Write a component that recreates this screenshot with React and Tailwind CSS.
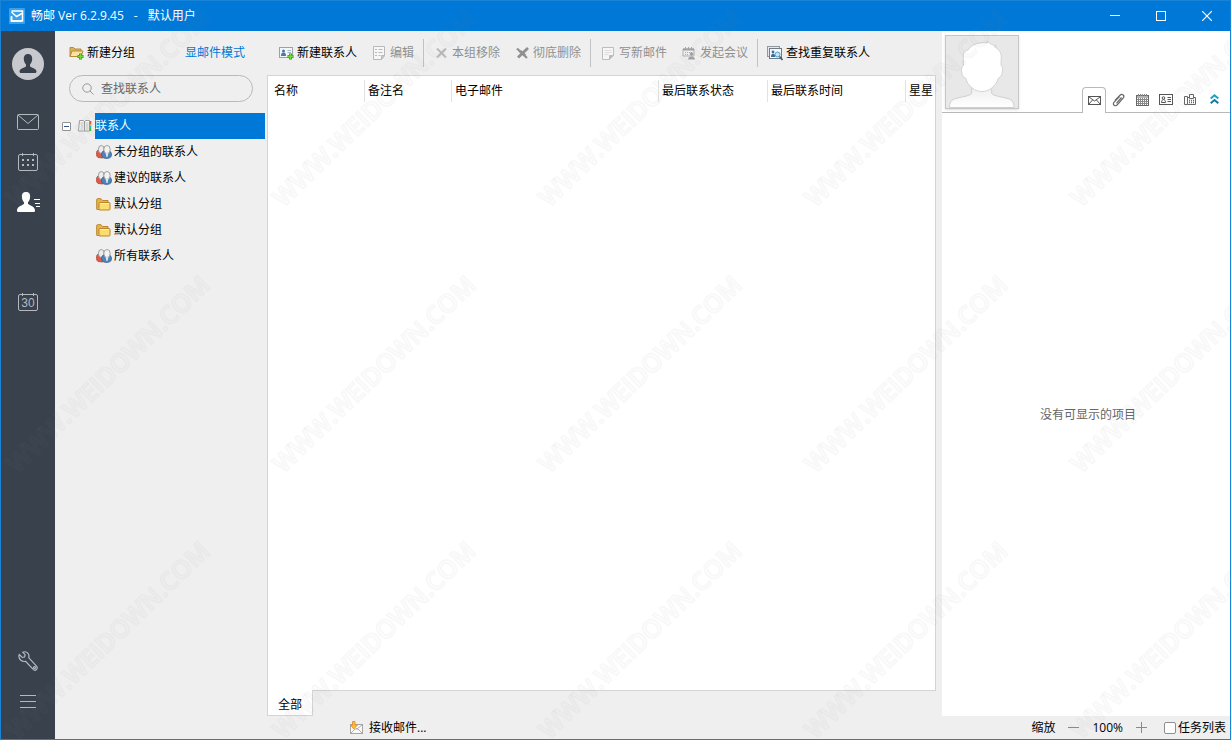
import { useState } from "react";

const FolderPlusIcon = () => (
  <svg width="15" height="14" viewBox="0 0 15 14" fill="none">
    <path d="M1 10.5V1.500h3.500l1.500 1.500H12v2" fill="#d9b25c" stroke="#b58a3a" />
    <path d="M1 10.500L3 5H14l-2 5.500z" fill="#fbe3a4" stroke="#b58a3a" />
    <path d="M8.500 10.500h6M11.500 7.500v6" stroke="#3a9a1c" strokeWidth="3" />
    <path d="M9 10.500h5M11.500 8v5" stroke="#6fdc3c" strokeWidth="1.400" />
  </svg>
);

const ContactPlusIcon = () => (
  <svg width="15" height="13" viewBox="0 0 15 13" fill="none">
    <rect x=".5" y=".5" width="13" height="10" fill="#f4f7fa" stroke="#96a2ac" />
    <circle cx="4.500" cy="4" r="1.500" fill="#4a78a6" />
    <path d="M2 9c0-2.600 1-3.400 2.500-3.400S7 6.400 7 9z" fill="#4a78a6" />
    <path d="M8.500 3.500h3.500M8.500 5.500h3.500" stroke="#a8b3bd" />
    <path d="M8.500 9.500h6M11.500 6.500v6" stroke="#3a9a1c" strokeWidth="3" />
    <path d="M9 9.500h5M11.500 7v5" stroke="#6fdc3c" strokeWidth="1.400" />
  </svg>
);

const EditIcon = () => (
  <svg width="12" height="14" viewBox="0 0 12 14" fill="none" stroke="#b9b9b9">
    <path d="M.5.500h11v9l-3 4h-8z" fill="#f7f7f7" />
    <path d="M8.500 13.500v-4h3z" fill="#ccc" />
    <path d="M2 3.500h2M5.500 3.500h4M2 6.500h2M5.500 6.500h4M2 9.500h2M5.500 9.500h2" />
  </svg>
);

const RemoveIcon = () => (
  <svg width="11" height="10" viewBox="0 0 11 10" fill="none" stroke="#b8b8b8" strokeWidth="2">
    <path d="M1 .5l9 9M10 .5l-9 9" />
  </svg>
);

const DeleteIcon = () => (
  <svg width="13" height="12" viewBox="0 0 13 12" fill="none" stroke="#909090">
    <path d="M1 1.500l10 9.500" strokeWidth="2.200" />
    <path d="M12 1L2 10.500" strokeWidth="2.800" />
    <path d="M4 4l5 4.500" strokeWidth="3" />
  </svg>
);

const NoteIcon = () => (
  <svg width="12" height="13" viewBox="0 0 12 13" fill="none" stroke="#bdbdbd">
    <path d="M.5.500h11v8l-4 4h-7z" fill="#f6f6f6" />
    <path d="M7.500 12.500v-4h4z" fill="#bbb" />
    <path d="M2.500 3.500h7M2.500 5.500h7M2.500 7.500h4" stroke="#dedede" />
  </svg>
);

const MeetingIcon = () => (
  <svg width="14" height="13" viewBox="0 0 14 13" fill="none">
    <path d="M1 2h11v7H1z" fill="#eee" stroke="#b0b0b0" />
    <path d="M1 2.500h11" stroke="#a0a0a0" strokeWidth="2" />
    <path d="M3.500 0v2M6.500 0v2M9.500 0v2" stroke="#a5a5a5" />
    <path d="M3 5.500h7M3 7.500h4" stroke="#aaa" strokeDasharray="1 1" />
    <circle cx="9.500" cy="7" r="1.800" fill="#a0a0a0" />
    <path d="M6 12.500c0-4 7-4 7 0z" fill="#a0a0a0" />
  </svg>
);

const FindDuplicateIcon = () => (
  <svg width="16" height="15" viewBox="0 0 16 15" fill="none">
    <rect x=".5" y=".5" width="12" height="10" fill="#e6eaee" stroke="#8e99a2" />
    <rect x="2.500" y="2.500" width="12" height="10" fill="#f6f9fb" stroke="#6f7c87" />
    <circle cx="6" cy="6" r="1.400" fill="#3d6c9c" />
    <path d="M4 11c0-2.600.8-3.300 2-3.300s2.200.7 2.200 3.300z" fill="#3d6c9c" />
    <circle cx="10.500" cy="8.500" r="2.500" fill="#bfe6f5" stroke="#4f9cc0" />
    <path d="M12.500 10.500l3 3.500" stroke="#4a5661" strokeWidth="1.600" />
  </svg>
);

const PeopleIcon = () => (
  <svg width="16" height="14" viewBox="0 0 16 14" fill="none">
    <path d="M2 12.500C-.5 10.500 0 6.500 2 5l5 1v7z" fill="#dd5a48" stroke="#b04438" strokeWidth=".8" />
    <ellipse cx="5.300" cy="4.500" rx="2.900" ry="4" fill="#ececec" stroke="#8a8a8a" strokeWidth=".8" />
    <path d="M6 11.500C4.800 8.500 6 6.500 7.500 6h6c2 1 2.700 4 1.300 6-2 2-7 2-8.800-.5z" fill="#4d84bb" stroke="#35618f" strokeWidth=".8" />
    <ellipse cx="11" cy="4.500" rx="3.200" ry="4" fill="#f3f3f3" stroke="#8a8a8a" strokeWidth=".8" />
    <path d="M9.500 7.500h3L11.500 12h-1z" fill="#dce8f3" />
  </svg>
);

const FolderIcon = () => (
  <svg width="15" height="13" viewBox="0 0 15 13" fill="none">
    <path d="M.7 11.500V1.500Q.7.700 1.500.700h3.500L6.500 2.500h5.500v2" fill="#e8b44c" stroke="#bb852a" />
    <rect x="3" y="4.500" width="11" height="7.500" rx="1" fill="#fbdc6e" stroke="#bb852a" />
    <path d="M4 5.500h9" stroke="#fff1b5" />
    <path d="M1 11.500h2.500" stroke="#bb852a" />
  </svg>
);

const BookIcon = () => (
  <svg width="14" height="12" viewBox="0 0 14 12" fill="none">
    <path d="M1.500.500H5l1.500 1 1.500-1h3.500v10.500H.5z" fill="#fcfcfc" stroke="#9c9c9c" />
    <path d="M6.500 1v10" stroke="#9c9c9c" />
    <path d="M2.500 3h3M2.500 5h3M2.500 7h3M2.500 9h3M7.500 3h3M7.500 5h3M7.500 7h3M7.500 9h3" stroke="#b8b8b8" />
    <path d="M12.500 1v3" stroke="#e5503c" strokeWidth="1.500" />
    <path d="M12.500 4v2" stroke="#f0a53c" strokeWidth="1.500" />
    <path d="M12.500 6v2" stroke="#2bb6c8" strokeWidth="1.500" />
    <path d="M12.500 8v3" stroke="#38c437" strokeWidth="1.500" />
  </svg>
);

const UserIcon = () => (
  <svg width="32" height="32" viewBox="0 0 32 32">
    <circle cx="16" cy="16" r="16" fill="#c7c9ce" />
    <path d="M16 6c-3 0-4.300 2.200-4.200 5 .1 2.600 1.100 4.500 2.200 5.500v1.700c-.8 1.400-6.500 1.900-6.500 5.300 0 .900.600 1.500 1.500 1.500h14c.9 0 1.500-.6 1.500-1.500 0-3.400-5.700-3.900-6.500-5.300v-1.700c1.100-1 2.100-2.900 2.200-5.500.1-2.800-1.200-5-4.200-5z" fill="#38414c" />
  </svg>
);

const RailMailIcon = () => (
  <svg width="22" height="16" viewBox="0 0 22 16" fill="none" stroke="currentColor">
    <rect x=".5" y=".5" width="21" height="15" rx="1" />
    <path d="M1 1l10 8.500L21 1" />
  </svg>
);

const RailCalendarIcon = () => (
  <svg width="20" height="18" viewBox="0 0 20 18" fill="none" stroke="currentColor">
    <rect x=".5" y="1.500" width="19" height="16" rx="1.500" />
    <path d="M4.500 0v3M15.500 0v3" />
    <path d="M4 7h2M9 7h2M14 7h2M4 12h2M9 12h2M14 12h2" strokeWidth="2" />
  </svg>
);

const RailContactsIcon = () => (
  <svg width="24" height="20" viewBox="0 0 24 20" fill="none">
    <path d="M10 0C6.900 0 5.800 2 5.900 4.800 6 7.200 6.800 9 8 10.200v1.600C7.300 13.500 1 13.800 1 18.500 1 19.500 1.500 20 2.500 20h15c1 0 1.500-.5 1.500-1.500 0-4.700-6.300-5-7-6.700v-1.600c1.200-1.200 2-3 2.100-5.400C14.200 2 13.100 0 10 0z" fill="#fff" />
    <path d="M18 7.500h6M19 11.500h5M20 14.500h4" stroke="#fff" />
  </svg>
);

const RailThirtyIcon = () => (
  <svg width="20" height="18" viewBox="0 0 20 18" fill="none">
    <rect x=".5" y="1.500" width="19" height="16" rx="1.500" stroke="currentColor" />
    <path d="M4.500 0v3M15.500 0v3" stroke="currentColor" />
    <text x="10" y="14" textAnchor="middle" fontSize="12" fontFamily="Liberation Sans, sans-serif" fill="currentColor">30</text>
  </svg>
);

const WrenchIcon = () => (
  <svg width="20" height="20" viewBox="0 0 20 20" fill="none" stroke="currentColor" strokeWidth="1.200">
    <path d="M4.700 1.200c2-.9 4.600-.1 5.700 1.800.7 1.200.7 2.500.300 3.700l7.800 8.400c.9 1 .8 2.500-.1 3.400-.9.900-2.300.8-3.200-.1L7.500 10.300c-1.400.400-3.200.100-4.600-1.100C1 7.500.500 5.400 1.300 3.500l3 2.900 2.300-.4.500-2.300z" />
    <circle cx="16.500" cy="16.500" r="1" />
  </svg>
);

const MenuIcon = () => (
  <svg width="16" height="13" viewBox="0 0 16 13" stroke="currentColor">
    <path d="M0 .5h16M0 6.500h16M0 12.500h16" />
  </svg>
);

const PortraitIcon = () => (
  <svg width="72" height="72" viewBox="0 0 72 72">
    <defs>
      <linearGradient id="neck" x1="0" y1="0" x2="0" y2="1">
        <stop offset="0" stopColor="#ececec" />
        <stop offset="1" stopColor="#fff" />
      </linearGradient>
    </defs>
    <path
      d="M25.700 48v9.500c-3 3-12 3.500-17.500 5.500-3.500 1.500-4.700 4-4.700 8.500H68c0-4.500-1.200-7-4.700-8.500-5.500-2-14.600-2.500-17.600-5.500V48z"
      fill="url(#neck)"
      stroke="#cfcfcf"
    />
    <path
      d="M34 7c3-.5 5.500-.4 7.700 0L41 5l4.500 3.500 5 1.200-2.500.8c4.500 2.500 7 5.500 7.300 9.500L55 29.500c2 .5 1.800 4 1.300 6.500-.4 3-1.500 5.500-3.800 6C50 50.500 43 55.500 36 55.500S22 50.500 19.500 42c-2.300-.5-3.400-3-3.800-6-.4-2.500-.2-6 1.800-6.500L17.300 19c.2-2.500 1.500-4.500 4.700-5 2.500-4 7-6.500 12-7z"
      fill="#fff"
      stroke="#d4d4d4"
    />
    <path d="M28 54.500c5 2.300 11 2.300 16 0v2H28z" fill="#f1f1f1" />
  </svg>
);

const TabMailIcon = () => (
  <svg width="13" height="9" viewBox="0 0 13 9" fill="none" stroke="#555">
    <rect x=".5" y=".5" width="12" height="8" />
    <path d="M1 1l5.500 4L12 1M1 8l3.500-4M12 8L8.500 4" />
  </svg>
);

const TabClipIcon = () => (
  <svg width="13" height="14" viewBox="0 0 13 14" fill="none" stroke="#666" strokeWidth="1.200">
    <path d="M3 7.500L8 2.300c2.200-2 5 .2 3.300 2.500L5.500 11.700c-2 2.300-5.500.1-3.600-2.400L7.500 3.500M4.500 10.300L9.500 4.500" />
  </svg>
);

const TabCalendarIcon = () => (
  <svg width="13" height="12" viewBox="0 0 13 12" fill="none" stroke="#666">
    <rect x=".5" y="1.500" width="12" height="10" />
    <path d="M1 3h11" />
    <path d="M2.500 0v2M4.500 0v2M6.500 0v2M8.500 0v2M10.500 0v2M2.500 4v7M4.500 4v7M6.500 4v7M8.500 4v7M10.500 4v7" stroke="#888" />
    <path d="M1 5.500h11M1 7.500h11M1 9.500h11" stroke="#888" />
  </svg>
);

const TabCardIcon = () => (
  <svg width="14" height="11" viewBox="0 0 14 11" fill="none" stroke="#555">
    <rect x=".5" y=".5" width="13" height="10" />
    <circle cx="4.500" cy="4" r="1.300" />
    <path d="M2.500 8.500c0-4 4-4 4 0z" />
    <path d="M8.500 3.500h3.500M8.500 5.500h3.500M8.500 7.500h3.500" />
  </svg>
);

const TabFaxIcon = () => (
  <svg width="12" height="11" viewBox="0 0 12 11" fill="none" stroke="#666">
    <path d="M.5 2.500h3v8h-3zM3.500 3.500h2M9.500 3.500h2v7h-8" />
    <path d="M5.500 4.500v-4h4v4z" />
    <path d="M5 6.500h5M5 8.500h5" strokeDasharray="1 1" strokeWidth="1.500" />
  </svg>
);

const CollapseIcon = () => (
  <svg width="9" height="10" viewBox="0 0 9 10" fill="none" strokeWidth="2">
    <path d="M.7 4.500L4.500 1.300l3.800 3.200" stroke="#1ba0c8" />
    <path d="M.7 9.200L4.500 6l3.800 3.200" stroke="#0d79a8" />
  </svg>
);

const ReceiveIcon = () => (
  <svg width="13" height="14" viewBox="0 0 13 14" fill="none">
    <rect x=".5" y="3.500" width="12" height="9" fill="#fafafa" stroke="#a5a5a5" />
    <path d="M1 12l4-4h3l4 4M6 7l1 1 5-4" stroke="#b0b0b0" />
    <path d="M2.500.500h2.500v3.500h2.500L3.800 8 .3 4h2.200z" fill="#fbc02d" stroke="#e8852a" strokeWidth=".8" />
  </svg>
);

const railItems = [
  { label: "邮件", Icon: RailMailIcon },
  { label: "日历", Icon: RailCalendarIcon },
  { label: "联系人", Icon: RailContactsIcon },
];

const toolbarGroups = [
  [
    { label: "新建联系人", Icon: ContactPlusIcon },
    { label: "编辑", Icon: EditIcon, disabled: true },
  ],
  [
    { label: "本组移除", Icon: RemoveIcon, disabled: true },
    { label: "彻底删除", Icon: DeleteIcon, disabled: true },
  ],
  [
    { label: "写新邮件", Icon: NoteIcon, disabled: true },
    { label: "发起会议", Icon: MeetingIcon, disabled: true },
  ],
  [{ label: "查找重复联系人", Icon: FindDuplicateIcon }],
];

const groups = [
  { id: 1, name: "未分组的联系人", Icon: PeopleIcon },
  { id: 2, name: "建议的联系人", Icon: PeopleIcon },
  { id: 3, name: "默认分组", Icon: FolderIcon },
  { id: 4, name: "默认分组", Icon: FolderIcon },
  { id: 5, name: "所有联系人", Icon: PeopleIcon },
];

const columns = [
  { title: "名称", style: "w-[97px]", cell: "border-r pl-[6px]" },
  { title: "备注名", style: "w-[87px]", cell: "border-r pl-[3px]" },
  { title: "电子邮件", style: "w-[207px]", cell: "border-r pl-[3px]" },
  { title: "最后联系状态", style: "w-[109px]", cell: "border-r pl-[3px]" },
  { title: "最后联系时间", style: "w-[138px]", cell: "border-r pl-[3px]" },
  { title: "星星", style: "", cell: "pl-[3px]" },
];

const detailTabs = [
  { label: "邮件", Icon: TabMailIcon },
  { label: "附件", Icon: TabClipIcon },
  { label: "日历", Icon: TabCalendarIcon },
  { label: "名片", Icon: TabCardIcon },
  { label: "传真", Icon: TabFaxIcon },
];

const TitleBar = () => (
  <header className="flex h-[30px] items-center bg-[#0078d7] pl-2 text-white">
    <svg width="16" height="16" viewBox="0 0 16 16" fill="none">
      <rect width="16" height="16" rx="1" fill="#3ba0ea" />
      <path d="M2.500 3h11v10h-11V9" stroke="#fff" strokeWidth="1.500" />
      <path d="M2.500 4l5 4.500L13 5.500M2.500 8v5H13" stroke="#fff" strokeWidth="1.500" />
    </svg>
    <h1 className="ml-1.5 flex flex-1 gap-2.5">
      <span>畅邮 Ver 6.2.9.45</span>
      <span>-</span>
      <span>默认用户</span>
    </h1>
    <button aria-label="最小化" className="flex h-full w-[46px] items-center justify-center">
      <svg width="10" height="10" viewBox="0 0 10 10" stroke="#fff">
        <path d="M0 4.500h10" />
      </svg>
    </button>
    <button aria-label="最大化" className="flex h-full w-[46px] items-center justify-center">
      <svg width="10" height="10" viewBox="0 0 10 10" fill="none" stroke="#fff">
        <rect x=".5" y=".5" width="9" height="9" />
      </svg>
    </button>
    <button aria-label="关闭" className="flex h-full w-[46px] items-center justify-center">
      <svg width="10" height="10" viewBox="0 0 10 10" stroke="#fff" strokeWidth="1.200">
        <path d="M0 0l10 10M10 0L0 10" />
      </svg>
    </button>
  </header>
);

const NavRail = () => (
  <nav className="flex w-[54px] shrink-0 flex-col items-center bg-[#38414c] pt-[17px] pb-[18px] text-[#b4b9c0]">
    <button aria-label="用户" className="mb-[22px]">
      <UserIcon />
    </button>
    {railItems.map(({ label, Icon }) => (
      <button key={label} aria-label={label} className="flex h-10 w-full items-center justify-center">
        <Icon />
      </button>
    ))}
    <button aria-label="今天" className="mt-[60px] flex h-10 w-full items-center justify-center">
      <RailThirtyIcon />
    </button>
    <button aria-label="设置" className="mt-auto flex h-10 w-full items-center justify-center">
      <WrenchIcon />
    </button>
    <button aria-label="菜单" className="flex h-10 w-full items-center justify-center">
      <MenuIcon />
    </button>
  </nav>
);

const GroupPanel = () => (
  <aside className="w-[212px] shrink-0">
    <div className="flex h-11 items-center justify-between pr-[22px] pl-[14px]">
      <button className="flex items-center gap-[3px]">
        <FolderPlusIcon />
        新建分组
      </button>
      <a href="#mail" className="text-[#0078d7]">
        显邮件模式
      </a>
    </div>
    <div className="mx-[14px] flex h-[27px] items-center gap-[7px] rounded-full border border-[#b9b9b9] pl-3">
      <svg width="12" height="12" viewBox="0 0 12 12" fill="none" stroke="#999">
        <circle cx="5" cy="5" r="4.200" />
        <path d="M8 8l3.500 3.500" />
      </svg>
      <input
        aria-label="查找联系人"
        placeholder="查找联系人"
        className="w-full min-w-0 flex-1 bg-transparent outline-none placeholder:text-[#666]"
      />
    </div>
    <ul className="mt-[11px]">
      <li>
        <div className="flex h-[26px] items-center pr-0.5 pl-[7px]">
          <button
            aria-label="折叠"
            className="flex h-[9px] w-[9px] items-center justify-center rounded-[1px] border border-[#919191] bg-white"
          >
            <span className="h-px w-[5px] bg-[#33518c]" />
          </button>
          <span className="mr-[3px] ml-[7px] shrink-0">
            <BookIcon />
          </span>
          <button className="h-full flex-1 bg-[#0078d7] text-left text-white">联系人</button>
        </div>
        <ul>
          {groups.map(({ id, name, Icon }) => (
            <li key={id}>
              <button className="flex h-[26px] w-full items-center pl-[41px] text-left">
                <span className="w-[18px]">
                  <Icon />
                </span>
                {name}
              </button>
            </li>
          ))}
        </ul>
      </li>
    </ul>
  </aside>
);

const Toolbar = () => (
  <div className="flex h-11 items-center pl-[11px]">
    {toolbarGroups.map((items, i) => (
      <div
        key={i}
        className={`flex items-center gap-[14px] ${
          i < toolbarGroups.length - 1 ? "mr-[9px] h-7 border-r border-[#c2c2c2] pr-[9px]" : ""
        }`}
      >
        {items.map(({ label, Icon, disabled }) => (
          <button
            key={label}
            disabled={disabled}
            className="flex items-center gap-[3px] whitespace-nowrap disabled:text-[#8f8f8f]"
          >
            <span className="flex w-4 justify-center">
              <Icon />
            </span>
            {label}
          </button>
        ))}
      </div>
    ))}
  </div>
);

const ContactList = () => (
  <main className="flex min-w-0 flex-1 flex-col">
    <Toolbar />
    <div className="flex-1 overflow-hidden border border-[#d4d4d4] bg-white">
      <table className="w-full table-fixed border-collapse">
        <thead>
          <tr>
            {columns.map(({ title, style, cell }) => (
              <th key={title} className={`h-[30px] p-0 text-left font-normal whitespace-nowrap ${style}`}>
                <div className={`flex h-[22px] items-center border-[#e2e2e2] ${cell}`}>{title}</div>
              </th>
            ))}
          </tr>
        </thead>
        <tbody />
      </table>
    </div>
    <div className="flex h-[25px]">
      <button className="-mt-px w-[46px] border border-t-0 border-[#d4d4d4] bg-white pt-1">全部</button>
    </div>
  </main>
);

const DetailPanel = () => {
  const [active, setActive] = useState("邮件");

  return (
    <section className="ml-[6px] flex w-[288px] shrink-0 flex-col bg-white">
      <div className="flex h-[82px] items-stretch">
        <div className="flex-1 border-b border-[#b9b9b9] pt-1 pl-[3px]">
          <div className="h-[74px] w-[74px] overflow-hidden border border-[#c6c6c6] bg-[#e8e8e8] shadow">
            <PortraitIcon />
          </div>
        </div>
        <div className="flex">
          {detailTabs.map(({ label, Icon }) => (
            <div key={label} className="flex flex-col justify-end">
              <button
                aria-label={label}
                onClick={() => setActive(label)}
                className={`flex h-[26px] w-6 items-center justify-center ${
                  active === label
                    ? "rounded-t-sm border border-b-0 border-[#b9b9b9]"
                    : "border-b border-[#b9b9b9]"
                }`}
              >
                <Icon />
              </button>
            </div>
          ))}
          <div className="flex w-7 flex-col justify-end border-b border-[#b9b9b9] pr-[3px]">
            <button aria-label="收起" className="flex h-[26px] items-center justify-center">
              <CollapseIcon />
            </button>
          </div>
        </div>
      </div>
      <div className="flex flex-1 items-center justify-center pl-1 text-[#666]">
        <p>没有可显示的项目</p>
      </div>
    </section>
  );
};

const StatusBar = () => (
  <footer className="flex h-[23px] items-center pr-1 pl-[295px]">
    <button className="flex items-center gap-[6px]">
      <ReceiveIcon />
      接收邮件...
    </button>
    <div className="ml-auto flex items-center gap-[13px]">
      <span>缩放</span>
      <button aria-label="缩小">
        <svg width="11" height="11" viewBox="0 0 11 11" stroke="#8a8a8a">
          <path d="M0 5.500h11" />
        </svg>
      </button>
      <span>100%</span>
      <button aria-label="放大">
        <svg width="11" height="11" viewBox="0 0 11 11" stroke="#8a8a8a">
          <path d="M0 5.500h11M5.500 0v11" />
        </svg>
      </button>
      <label className="ml-1 flex items-center gap-[2px]">
        <input type="checkbox" className="h-3 w-3 appearance-none rounded-xs border border-[#8f8f8f] bg-white" />
        任务列表
      </label>
    </div>
  </footer>
);

const Watermark = () => (
  <svg aria-hidden="true" className="pointer-events-none absolute inset-0 h-full w-full">
    <defs>
      <pattern id="mark" x="-26" y="-26" width="266" height="266" patternUnits="userSpaceOnUse">
        <text
          x="133"
          y="142"
          textAnchor="middle"
          transform="rotate(-44 133 133)"
          fontFamily="Open Sans, sans-serif"
          fontWeight="600"
          fontSize="25"
          fill="none"
          stroke="#808080"
          strokeOpacity=".055"
          strokeWidth="2"
        >
          WWW.WEIDOWN.COM
        </text>
      </pattern>
    </defs>
    <rect width="100%" height="100%" fill="url(#mark)" />
  </svg>
);

export default function App() {
  return (
    <div className="relative flex min-h-screen flex-col border border-[#1883d7] bg-[#efefef] font-['Open_Sans','Noto_Sans_CJK_SC',sans-serif] text-xs text-black">
      <TitleBar />
      <div className="flex flex-1">
        <NavRail />
        <div className="flex min-w-0 flex-1 flex-col">
          <div className="flex flex-1">
            <GroupPanel />
            <ContactList />
            <DetailPanel />
          </div>
          <StatusBar />
        </div>
      </div>
      <Watermark />
    </div>
  );
}
